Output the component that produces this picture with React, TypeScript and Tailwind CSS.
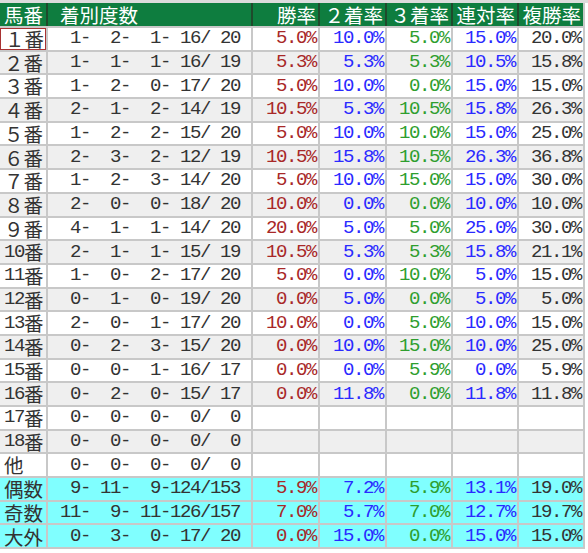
const GRID = "grid grid-cols-[46px_203px_65px_65px_64px_64px_64px] gap-x-[2px]";
const MONO = "font-['Liberation_Mono',monospace] text-[19px] tracking-[-1.4px] leading-none whitespace-pre";
const CJK = "font-['Noto_Sans_CJK_JP',sans-serif] text-[19.5px] leading-none";

type Row = {
  label: string;
  counts: number[];
  pct?: number[];
  total?: boolean;
};

const rows: Row[] = [
  { label: "１番", counts: [1, 2, 1, 16, 20], pct: [5.0, 10.0, 5.0, 15.0, 20.0] },
  { label: "２番", counts: [1, 1, 1, 16, 19], pct: [5.3, 5.3, 5.3, 10.5, 15.8] },
  { label: "３番", counts: [1, 2, 0, 17, 20], pct: [5.0, 10.0, 0.0, 15.0, 15.0] },
  { label: "４番", counts: [2, 1, 2, 14, 19], pct: [10.5, 5.3, 10.5, 15.8, 26.3] },
  { label: "５番", counts: [1, 2, 2, 15, 20], pct: [5.0, 10.0, 10.0, 15.0, 25.0] },
  { label: "６番", counts: [2, 3, 2, 12, 19], pct: [10.5, 15.8, 10.5, 26.3, 36.8] },
  { label: "７番", counts: [1, 2, 3, 14, 20], pct: [5.0, 10.0, 15.0, 15.0, 30.0] },
  { label: "８番", counts: [2, 0, 0, 18, 20], pct: [10.0, 0.0, 0.0, 10.0, 10.0] },
  { label: "９番", counts: [4, 1, 1, 14, 20], pct: [20.0, 5.0, 5.0, 25.0, 30.0] },
  { label: "10番", counts: [2, 1, 1, 15, 19], pct: [10.5, 5.3, 5.3, 15.8, 21.1] },
  { label: "11番", counts: [1, 0, 2, 17, 20], pct: [5.0, 0.0, 10.0, 5.0, 15.0] },
  { label: "12番", counts: [0, 1, 0, 19, 20], pct: [0.0, 5.0, 0.0, 5.0, 5.0] },
  { label: "13番", counts: [2, 0, 1, 17, 20], pct: [10.0, 0.0, 5.0, 10.0, 15.0] },
  { label: "14番", counts: [0, 2, 3, 15, 20], pct: [0.0, 10.0, 15.0, 10.0, 25.0] },
  { label: "15番", counts: [0, 0, 1, 16, 17], pct: [0.0, 0.0, 5.9, 0.0, 5.9] },
  { label: "16番", counts: [0, 2, 0, 15, 17], pct: [0.0, 11.8, 0.0, 11.8, 11.8] },
  { label: "17番", counts: [0, 0, 0, 0, 0] },
  { label: "18番", counts: [0, 0, 0, 0, 0] },
  { label: "他", counts: [0, 0, 0, 0, 0] },
  { label: "偶数", counts: [9, 11, 9, 124, 153], pct: [5.9, 7.2, 5.9, 13.1, 19.0], total: true },
  { label: "奇数", counts: [11, 9, 11, 126, 157], pct: [7.0, 5.7, 7.0, 12.7, 19.7], total: true },
  { label: "大外", counts: [0, 3, 0, 17, 20], pct: [0.0, 15.0, 0.0, 15.0, 15.0], total: true },
];

const pctColors = ["text-[#a82828]", "text-[#2a2aff]", "text-[#2e9e2e]", "text-[#2a2aff]", "text-[#333333]"];
const headers = ["勝率", "２着率", "３着率", "連対率", "複勝率"];

const pad = (n: number) => String(n).padStart(3, " ");
const fmtCounts = (c: number[]) => `${pad(c[0])}-${pad(c[1])}-${pad(c[2])}-${pad(c[3])}/${pad(c[4])}`;

function Label({ text }: { text: string }) {
  const m = text.match(/^(\d+)(.*)$/);
  if (m) {
    return (
      <span className="flex items-center">
        <span className={MONO}>{m[1]}</span>
        <span className={CJK}>{m[2]}</span>
      </span>
    );
  }
  return <span className={CJK}>{text}</span>;
}

export default function App() {
  return (
    <div className="w-[588px] h-[553px] bg-white overflow-hidden">
      <div className="h-[3px] bg-[#dcdcdc]" />
      <div className="w-[585px] bg-[#c8c8c8] pr-[2px] pb-[2px]">
        {/* header */}
        <div className={`${GRID} h-[23px] bg-[#1f4a2c] text-white`}>
          <div className="bg-[#0e7d3f] flex items-center pl-[4px]">
            <span className={CJK}>馬番</span>
          </div>
          <div className="bg-[#0e7d3f] flex items-center pl-[12px]">
            <span className={CJK}>着別度数</span>
          </div>
          {headers.map((h) => (
            <div key={h} className="bg-[#0e7d3f] flex items-center justify-end pr-[2px]">
              <span className={CJK}>{h}</span>
            </div>
          ))}
        </div>

        {/* body */}
        <div className={`${GRID} gap-y-[2px] auto-rows-[21.7px] mt-[2px] text-[#333333]`}>
          {rows.map((r, i) => {
            const bg = r.total ? "bg-[#80ffff]" : i % 2 === 0 ? "bg-white" : "bg-[#efefef]";
            return [
              <div
                key={`${r.label}-l`}
                className={`${bg} flex items-center pl-[4px] ${i === 0 ? "border border-[#a83232] pl-[3px]" : ""}`}
              >
                <Label text={r.label} />
              </div>,
              <div key={`${r.label}-c`} className={`${bg} flex items-center justify-end pr-[11px]`}>
                <span className={MONO}>{fmtCounts(r.counts)}</span>
              </div>,
              ...[0, 1, 2, 3, 4].map((k) => (
                <div key={`${r.label}-${k}`} className={`${bg} flex items-center justify-end pr-[2px]`}>
                  {r.pct && <span className={`${MONO} ${pctColors[k]}`}>{r.pct[k].toFixed(1)}%</span>}
                </div>
              )),
            ];
          })}
        </div>
      </div>
    </div>
  );
}
